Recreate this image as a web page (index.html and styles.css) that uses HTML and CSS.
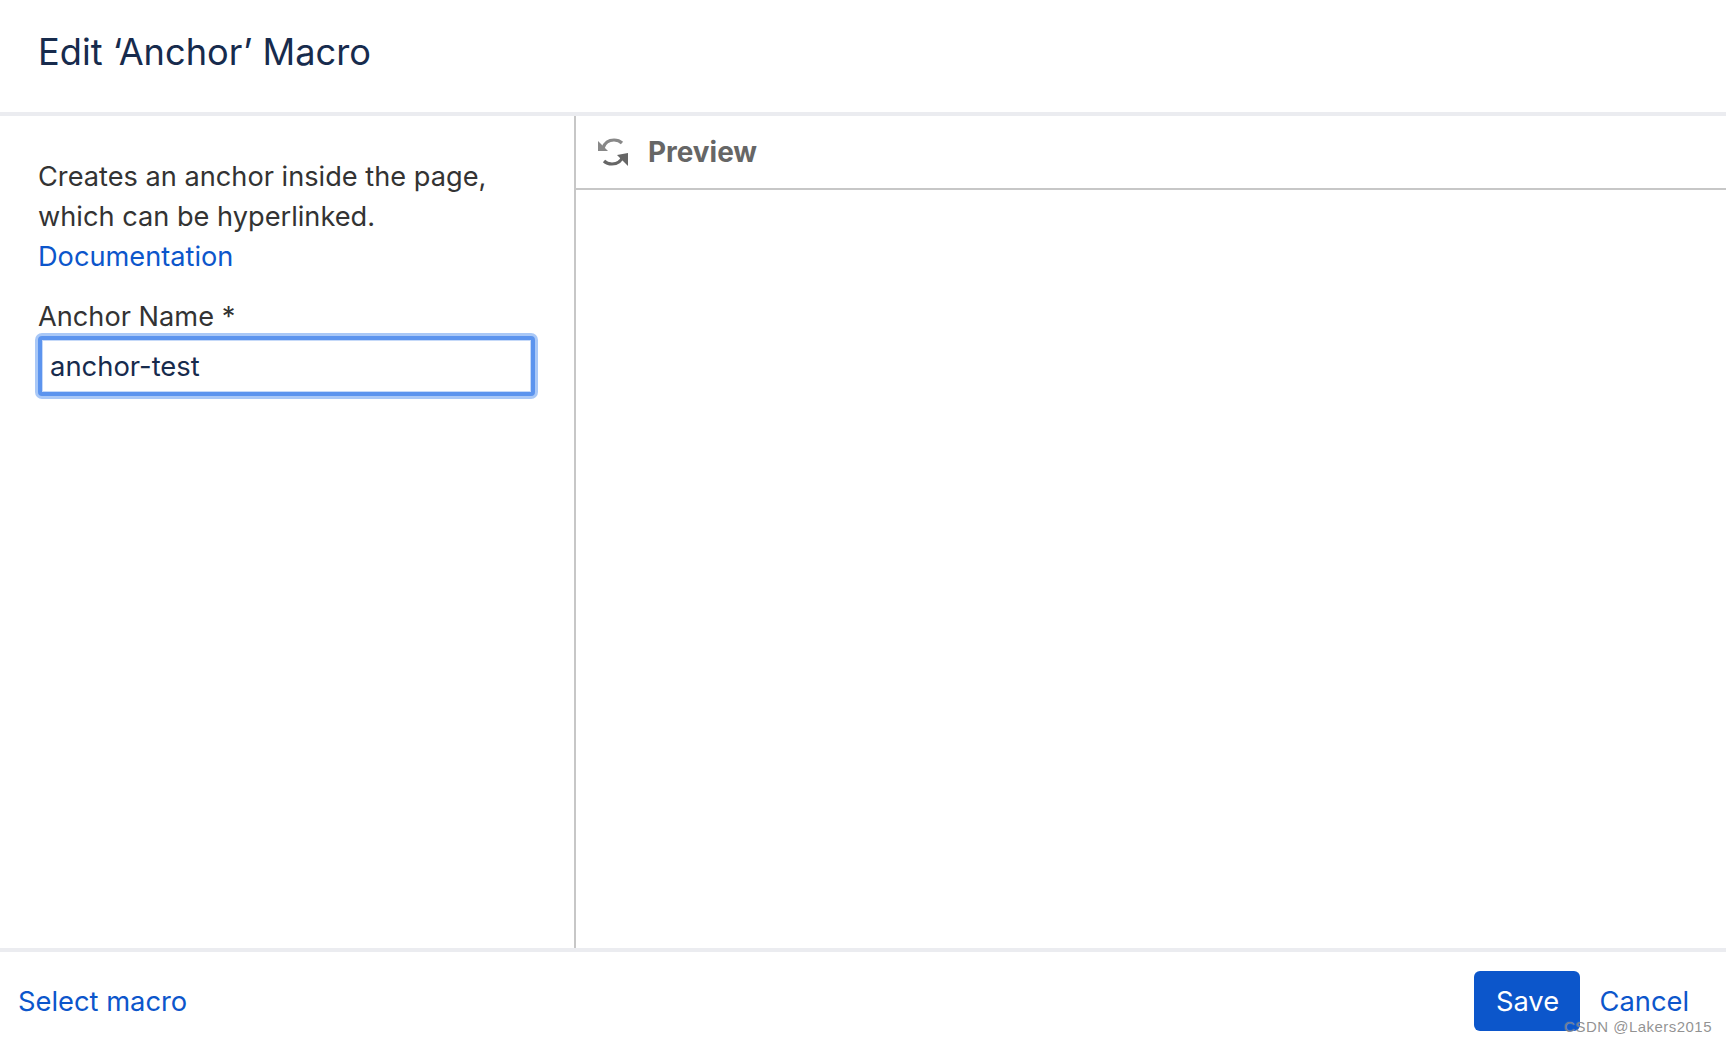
FILE: index.html
```html
<!DOCTYPE html>
<html lang="en">
<head>
  <meta charset="UTF-8">
  <title>Edit Anchor Macro</title>
  <meta name="viewport" content="width=device-width, initial-scale=1.0" />
  <link rel="stylesheet" href="styles.css">
</head>
<body>

  <div class="dialog">
    <div class="dialog-header">
      <h2>Edit ‘Anchor’ Macro</h2>
    </div>

    <div class="dialog-body">
      <div class="macro-form">
        <p class="macro-desc">Creates an anchor inside the page, which can be hyperlinked.<br><a href="#">Documentation</a></p>
        <label for="anchorName">Anchor Name *</label>
        <input type="text" id="anchorName" value="anchor-test" />
      </div>

      <div class="macro-preview">
        <div class="preview-bar">
          <svg class="refresh-icon" width="34" height="34" viewBox="0 0 34 34" fill="none">
            <path d="M7 13 C9 7 14 5 18 5 C21 5 24 6 26 8" stroke="#888" stroke-width="3.2"/>
            <path d="M2 6 L2 16 L12 16 Z" fill="#888"/>
            <path d="M27 21 C25 27 20 29 16 29 C13 29 10 28 8 26" stroke="#666" stroke-width="3.2"/>
            <path d="M32 18 L32 31 L21 20 Z" fill="#666"/>
          </svg>
          <span class="preview-title">Preview</span>
        </div>
      </div>
    </div>

    <div class="dialog-footer">
      <a href="#" class="select-macro">Select macro</a>
      <div class="footer-actions">
        <button class="save-btn">Save</button>
        <a href="#" class="cancel-link">Cancel</a>
      </div>
    </div>
  </div>

  <div class="watermark">CSDN @Lakers2015</div>

</body>
</html>
```

FILE: styles.css
```css
:root {
  --title: #172b4d;
  --link: #0c56cb;
  --divider: #ebecf0;
  --rule: #c7c7c7;
  --font-main: 'Inter', 'Liberation Sans', sans-serif;
}

html, body {
  height: 100%;
}

body {
  margin: 0;
  background: #ffffff;
  font-family: var(--font-main);
  color: #333333;
  position: relative;
  overflow: hidden;
}

.dialog {
  height: 1044px;
  display: flex;
  flex-direction: column;
}

.dialog-header {
  height: 112px;
  padding-left: 38px;
  display: flex;
  align-items: center;
  border-bottom: 4px solid var(--divider);
  flex-shrink: 0;
}

.dialog-header h2 {
  margin: 0 0 8px;
  font-size: 36.2px;
  font-weight: 400;
  color: var(--title);
}

.dialog-body {
  flex: 1;
  display: flex;
  min-height: 0;
}

.macro-form {
  width: 576px;
  box-sizing: border-box;
  padding: 41px 39px 0 38px;
  border-right: 2px solid var(--rule);
  flex-shrink: 0;
}

.macro-desc {
  margin: 0 0 20px;
  font-size: 27.2px;
  line-height: 40px;
}

.macro-desc a {
  color: var(--link);
  text-decoration: none;
}

.macro-form label {
  display: block;
  font-size: 27.2px;
  line-height: 40px;
}

.macro-form input {
  display: block;
  width: 100%;
  height: 60px;
  margin: -1px 0 0;
  padding: 0 8px;
  box-sizing: border-box;
  font-family: var(--font-main);
  font-size: 27.4px;
  color: var(--title);
  background: #ffffff;
  border: 4px solid #5c94ee;
  border-radius: 4px;
  box-shadow: 0 0 0 3px #a9c8f7, inset 0 0 0 1px #c5d9f9;
  outline: none;
}

.macro-preview {
  flex: 1;
}

.preview-bar {
  height: 74px;
  box-sizing: border-box;
  padding-left: 20px;
  display: flex;
  align-items: center;
  gap: 18px;
  border-bottom: 2px solid var(--rule);
}

.refresh-icon {
  filter: blur(0.6px);
}

.preview-title {
  font-size: 27.9px;
  font-weight: 700;
  color: #666666;
}

.dialog-footer {
  height: 96px;
  box-sizing: border-box;
  padding: 6px 37px 0 18px;
  display: flex;
  align-items: center;
  justify-content: space-between;
  border-top: 4px solid var(--divider);
  flex-shrink: 0;
}

.select-macro,
.cancel-link {
  font-size: 27.3px;
  color: var(--link);
  text-decoration: none;
}

.footer-actions {
  display: flex;
  align-items: center;
  gap: 19px;
}

.save-btn {
  width: 106px;
  height: 60px;
  border: none;
  border-radius: 6px;
  background: var(--link);
  color: #ffffff;
  font-family: var(--font-main);
  font-size: 27.3px;
}

.watermark {
  position: absolute;
  right: 14px;
  bottom: 9px;
  font-family: 'Liberation Sans', sans-serif;
  font-size: 15px;
  letter-spacing: 0.47px;
  color: rgba(110, 110, 110, 0.75);
  text-shadow: 0 0 1px rgba(255, 255, 255, 0.6);
}
```
